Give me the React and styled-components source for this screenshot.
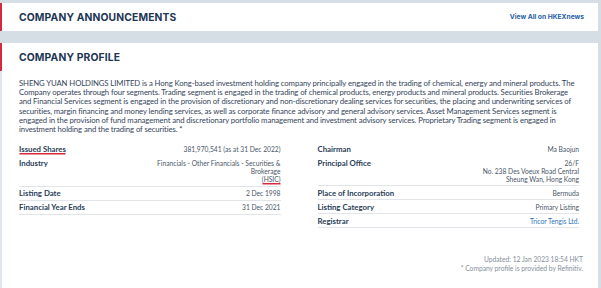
import React from 'react';
import styled, { createGlobalStyle } from 'styled-components';

const Global = createGlobalStyle`
  html, body { margin: 0; padding: 0; background: #d5dde5; }
  body { font-family: Lato, "Open Sans", sans-serif; -webkit-font-smoothing: antialiased; }
  * { box-sizing: border-box; }
`;

const Page = styled.div`
  min-height: 288px;
  padding: 3px 3px 0 0;
  display: flex;
  flex-direction: column;
  gap: 12px;
`;

const Panel = styled.section`
  background: #fff;
  display: flex;
  flex-direction: column;
  flex: ${p => (p.$grow ? 1 : 'none')};
`;

const PanelHeader = styled.header`
  height: 28px;
  display: flex;
  align-items: center;
  justify-content: space-between;
  border-left: 2px solid #d8283f;
  padding: 0 14px 0 17px;
`;

const Title = styled.h2`
  margin: 0;
  font-family: Inter, "Open Sans", sans-serif;
  font-size: 10.3px;
  font-weight: 700;
  color: #1d3654;
  letter-spacing: 0.15px;
`;

const HeaderLink = styled.a`
  font-family: Inter, "Open Sans", sans-serif;
  font-size: 6.7px;
  font-weight: 700;
  color: #1f5ea6;
  text-decoration: none;
`;

const Body = styled.div`
  flex: 1;
  border-left: 2px solid #e2e7ed;
  padding: 8px 19px 16px 17px;
`;

const Paragraph = styled.p`
  margin: 0;
  font-size: 7.75px;
  letter-spacing: -0.1px;
  line-height: 9.2px;
  color: #34445a;
`;

const Grid = styled.div`
  display: grid;
  grid-template-columns: 1fr 1fr;
  column-gap: 37px;
  margin-top: 8px;
  align-items: start;
`;

const Table = styled.div`
  display: flex;
  flex-direction: column;
`;

const Row = styled.div`
  display: flex;
  justify-content: space-between;
  gap: 12px;
  padding: 2.5px 0;
  line-height: 8px;
  border-bottom: 1px solid ${p => (p.$plain ? 'transparent' : '#e1e5ea')};
`;

const Label = styled.span`
  font-size: 7.8px;
  font-weight: 700;
  color: #2a3d57;
  white-space: nowrap;
  align-self: flex-start;
  ${p => p.$mark && 'box-shadow: 0 2px 0 -0.5px #d8283f; padding-bottom: 0.5px;'}
`;

const Value = styled.span`
  font-size: 6.7px;
  text-align: right;
  color: ${p => (p.$link ? '#2d74bf' : '#4a5668')};
`;

const Marked = styled.span`
  box-shadow: 0 2px 0 -0.5px #d8283f;
`;

const Footer = styled.div`
  margin-top: 27px;
  margin-right: -4px;
  text-align: right;
  font-size: 6.7px;
  line-height: 9px;
  color: #858f9b;
`;

const left = [
  { label: 'Issued Shares', value: '381,970,541 (as at 31 Dec 2022)', mark: true, plain: true },
  {
    label: 'Industry',
    value: (
      <>
        Financials - Other Financials - Securities &amp;
        <br />
        Brokerage
        <br />
        <Marked>(HSIC)</Marked>
      </>
    ),
  },
  { label: 'Listing Date', value: '2 Dec 1998' },
  { label: 'Financial Year Ends', value: '31 Dec 2021' },
];

const right = [
  { label: 'Chairman', value: 'Ma Baojun', plain: true },
  {
    label: 'Principal Office',
    value: (
      <>
        26/F
        <br />
        No. 238 Des Voeux Road Central
        <br />
        Sheung Wan, Hong Kong
      </>
    ),
  },
  { label: 'Place of Incorporation', value: 'Bermuda' },
  { label: 'Listing Category', value: 'Primary Listing' },
  { label: 'Registrar', value: 'Tricor Tengis Ltd.', link: true },
];

const InfoTable = ({ rows }) => (
  <Table>
    {rows.map(r => (
      <Row key={r.label} $plain={r.plain}>
        <Label $mark={r.mark}>{r.label}</Label>
        <Value $link={r.link}>{r.value}</Value>
      </Row>
    ))}
  </Table>
);

export default function App() {
  return (
    <>
      <Global />
      <Page>
        <Panel>
          <PanelHeader>
            <Title>COMPANY ANNOUNCEMENTS</Title>
            <HeaderLink href="#">View All on HKEXnews</HeaderLink>
          </PanelHeader>
        </Panel>
        <Panel $grow>
          <PanelHeader>
            <Title>COMPANY PROFILE</Title>
          </PanelHeader>
          <Body>
            <Paragraph>
              SHENG YUAN HOLDINGS LIMITED is a Hong Kong-based investment holding company principally engaged in the
              trading of chemical, energy and mineral products. The Company operates through four segments. Trading
              segment is engaged in the trading of chemical products, energy products and mineral products. Securities
              Brokerage and Financial Services segment is engaged in the provision of discretionary and non-discretionary
              dealing services for securities, the placing and underwriting services of securities, margin financing and
              money lending services, as well as corporate finance advisory and general advisory services. Asset
              Management Services segment is engaged in the provision of fund management and discretionary portfolio
              management and investment advisory services. Proprietary Trading segment is engaged in investment holding
              and the trading of securities. *
            </Paragraph>
            <Grid>
              <InfoTable rows={left} />
              <InfoTable rows={right} />
            </Grid>
            <Footer>
              Updated: 12 Jan 2023 18:54 HKT
              <br />* Company profile is provided by Refinitiv.
            </Footer>
          </Body>
        </Panel>
      </Page>
    </>
  );
}
